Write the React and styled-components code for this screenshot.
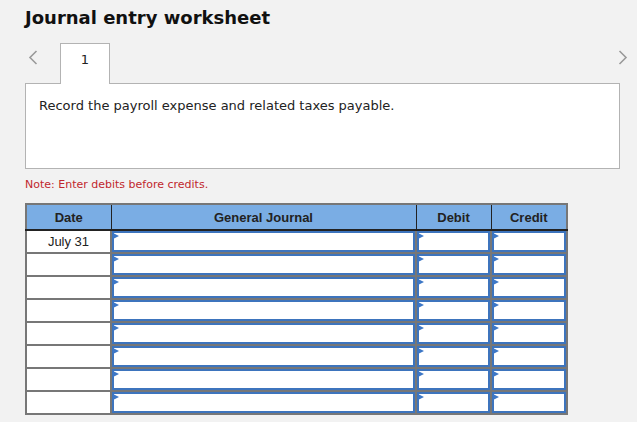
import { styled, createGlobalStyle } from "styled-components";

const GlobalStyle = createGlobalStyle`
  html, body {
    margin: 0;
    padding: 0;
    background: #f2f2f2;
  }
  body {
    font-family: "DejaVu Sans", Verdana, sans-serif;
    color: #222;
  }
`;

const rows = ["July 31", "", "", "", "", "", "", ""];

const Chevron = ({ dir }) => (
  <svg width="10" height="15" viewBox="0 0 10 15">
    <path
      d={dir === "left" ? "M8.5 1 L2 7.5 L8.5 14" : "M1.5 1 L8 7.5 L1.5 14"}
      fill="none"
      stroke="#9a9a9a"
      strokeWidth="1.6"
    />
  </svg>
);

const App = () => {
  return (
    <Page>
      <GlobalStyle />
      <Title>Journal entry worksheet</Title>
      <TabBar>
        <Arrow side="left">
          <Chevron dir="left" />
        </Arrow>
        <Tab>1</Tab>
        <Spacer />
        <Arrow side="right">
          <Chevron dir="right" />
        </Arrow>
      </TabBar>
      <Panel>Record the payroll expense and related taxes payable.</Panel>
      <Note>Note: Enter debits before credits.</Note>
      <Table>
        <colgroup>
          <col style={{ width: 85 }} />
          <col style={{ width: 305 }} />
          <col style={{ width: 75 }} />
          <col style={{ width: 76 }} />
        </colgroup>
        <thead>
          <tr>
            <Th>Date</Th>
            <Th>General Journal</Th>
            <Th>Debit</Th>
            <Th $last>Credit</Th>
          </tr>
        </thead>
        <tbody>
          {rows.map((d, i) => (
            <tr key={i}>
              <DateCell>{d}</DateCell>
              <InputCell>
                <Field />
              </InputCell>
              <InputCell>
                <Field />
              </InputCell>
              <InputCell>
                <Field />
              </InputCell>
            </tr>
          ))}
        </tbody>
      </Table>
    </Page>
  );
};

const Page = styled.div`
  padding: 7px 0 0 25px;
  width: 603px;
`;

const Title = styled.h1`
  margin: 0;
  font-size: 18px;
  line-height: 22px;
  font-weight: bold;
  color: #111;
`;

const TabBar = styled.div`
  display: flex;
  align-items: flex-start;
  height: 40px;
  margin-top: 14px;
`;

const Arrow = styled.div`
  width: ${(p) => (p.side === "left" ? "35px" : "10px")};
  padding-top: 7px;
  padding-left: ${(p) => (p.side === "left" ? "3px" : "0")};
  box-sizing: border-box;
  display: flex;
`;

const Tab = styled.div`
  width: 50px;
  height: 41px;
  box-sizing: border-box;
  border: 1px solid #b3b3b3;
  border-bottom: none;
  background: #fff;
  text-align: center;
  font-size: 13px;
  line-height: 31px;
  position: relative;
  z-index: 1;
`;

const Spacer = styled.div`
  flex: 1;
`;

const Panel = styled.div`
  width: 595px;
  height: 86px;
  box-sizing: border-box;
  border: 1px solid #b3b3b3;
  background: #fff;
  padding: 14px 13px;
  font-size: 13px;
  line-height: 16px;
  color: #222;
`;

const Note = styled.div`
  margin-top: 9px;
  font-size: 11px;
  line-height: 13px;
  color: #c1272d;
`;

const Table = styled.table`
  margin-top: 12px;
  border-collapse: collapse;
  table-layout: fixed;
  width: 541px;
  border: 2px solid #777;
  font-family: "Liberation Sans", Arial, sans-serif;
`;

const Th = styled.th`
  background: #7aade4;
  height: 24px;
  padding: 0;
  font-size: 13px;
  font-weight: bold;
  color: #222;
  border-bottom: 2px solid #222;
  border-right: ${(p) => (p.$last ? "none" : "1px solid #222")};
`;

const DateCell = styled.td`
  height: 21px;
  padding: 0;
  background: #fff;
  border: 2px solid #777;
  text-align: center;
  font-size: 13px;
  color: #222;
`;

const InputCell = styled.td`
  padding: 0;
  border: 2px solid #777;
  background: #fff;
`;

const Field = styled.div`
  position: relative;
  height: 17px;
  border: 2px solid #3d74bd;
  background: #fff;

  &::before {
    content: "";
    position: absolute;
    left: -1px;
    top: 0;
    border-top: 3.5px solid transparent;
    border-bottom: 3.5px solid transparent;
    border-left: 6px solid #3d77c6;
  }
`;

export default App;
